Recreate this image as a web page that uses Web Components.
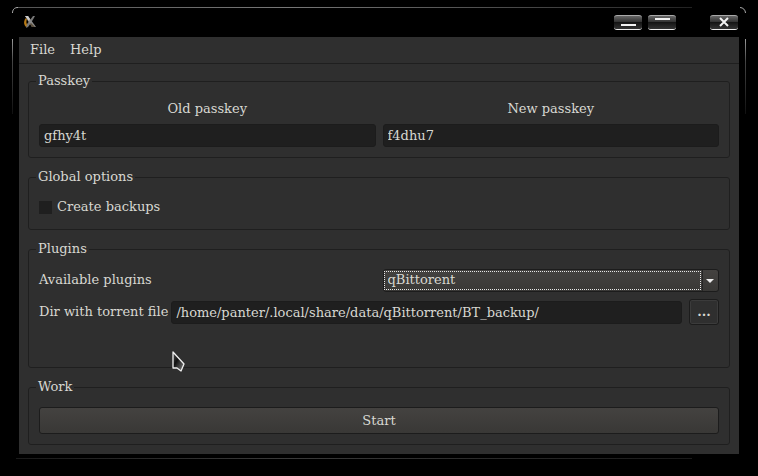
<!DOCTYPE html>
<html lang="en">
<head>
<meta charset="utf-8">
<title>Passkey</title>
<style>
  html, body {
    margin: 0;
    background: #000;
  }
  body {
    font: 13px/16px "DejaVu Serif", serif;
    color: #d8d8d2;
  }
  .columns {
    display: grid;
    grid-template-columns: 1fr 1fr;
    gap: 7px;
  }
  .rows {
    display: flex;
    flex-direction: column;
    gap: 6px;
  }
</style>
</head>
<body>

<app-window>
  <menu-bar slot="menu">
    <menu-item>File</menu-item>
    <menu-item>Help</menu-item>
  </menu-bar>

  <group-box label="Passkey">
    <div class="columns">
      <text-field label="Old passkey" value="gfhy4t"></text-field>
      <text-field label="New passkey" value="f4dhu7"></text-field>
    </div>
  </group-box>

  <group-box label="Global options">
    <check-option>Create backups</check-option>
  </group-box>

  <group-box label="Plugins" class="grow">
    <div class="rows">
      <combo-row label="Available plugins" options="qBittorent"></combo-row>
      <path-row label="Dir with torrent file" value="/home/panter/.local/share/data/qBittorrent/BT_backup/"></path-row>
    </div>
  </group-box>

  <group-box label="Work" class="roomy">
    <push-button>Start</push-button>
  </group-box>
</app-window>

<mouse-pointer></mouse-pointer>

<script>
'use strict';
(
  function () {

    // rules shared by every text box
    const inputStyle = `
      input {
        box-sizing: border-box;
        width: 100%;
        min-width: 0;
        height: 23px;
        padding: 0 4px;
        border: 1px solid #1c1c1c;
        border-radius: 3px;
        background: #1f1f1f;
        color: inherit;
        font: inherit;
        outline: none;
      }
    `;

    // attaches an open shadow root and fills it with the markup
    const render = function (element, markup) {
      const shadow = element.attachShadow({ mode: 'open' });
      shadow.innerHTML = markup;
      return shadow;
    };

    class AppWindow extends HTMLElement {
      constructor() {
        super();

        render(this, `
        <style>
          :host {
            box-sizing: border-box;
            position: relative;
            display: flex;
            flex-direction: column;
            min-height: 100vh;
            padding: 7px 19px 22px;
            background:
              linear-gradient(90deg, #555, #777 40%, #333 90%, #222) 16px 7px / calc(100% - 82px) 1px no-repeat,
              linear-gradient(#999, #444 30%, #111) 12px 39px / 1px 75px no-repeat,
              linear-gradient(#999, #444 30%, #111) calc(100% - 12px) 39px / 1px 75px no-repeat,
              linear-gradient(90deg, #1a1a1a, #3a3a3a 40%, #1a1a1a) 16px calc(100% - 17px) / calc(100% - 82px) 1px no-repeat,
              #000;
          }

          .corner {
            position: absolute;
            top: 7px;
            fill: none;
            stroke: #aaa;
          }

          .left {
            left: 12px;
          }

          .right {
            right: 12px;
          }

          header {
            display: flex;
            align-items: center;
            height: 30px;
            padding: 0 1px 0 4px;
          }

          .logo {
            margin-right: auto;
          }

          .buttons {
            display: flex;
            gap: 6px;
          }

          .client {
            flex: 1;
            display: flex;
            flex-direction: column;
            background: #2f2f2f;
          }

          main {
            flex: 1;
            display: flex;
            flex-direction: column;
            gap: 11px;
            padding: 9px;
          }
        </style>

        <svg class="corner left" width="6" height="7"><path d="M.5 6C.5 3 2 .5 6 .5"/></svg>
        <svg class="corner right" width="6" height="7"><path d="M0 .5C3 .5 5.500 3 5.500 6"/></svg>
        <header>
          <svg class="logo" width="14" height="14" viewBox="0 0 14 14">
            <path d="M3 3C1 5 0 9 3 12L5 11C3 9 3 6 4 4Z" fill="#b77a16"/>
            <path d="M12 1H10L4 9L3 13L5 12L8 8Z" fill="#777"/>
            <path d="M2 1H5L13 12L9 12L5 6Z" fill="#8a8a8a"/>
            <path d="M2 1H5L7 4L6 6Z" fill="#ccc"/>
            <path d="M8 8L12 12H9L7 9Z" fill="#5b4e3a"/>
          </svg>
          <div class="buttons">
            <caption-button kind="minimize"></caption-button>
            <caption-button kind="maximize"></caption-button>
            <caption-button kind="close"></caption-button>
          </div>
        </header>
        <div class="client">
          <slot name="menu"></slot>
          <main><slot></slot></main>
        </div>
        `);
      }
    }

    class CaptionButton extends HTMLElement {
      constructor() {
        super();

        const kind = this.getAttribute('kind');
        const glyphs = {
          minimize: '<path d="M7 10H22" stroke-width="2"/>',
          maximize: '<path d="M7 4H22" stroke-width="2"/>',
          close: '<path d="M10 3L18 11M18 3L10 11" stroke-width="2"/>'
        };

        render(this, `
        <style>
          :host {
            display: block;
          }

          :host([kind="close"]) {
            margin-left: 28px;
          }

          button {
            display: block;
            box-sizing: border-box;
            width: 28px;
            height: 15px;
            padding: 0;
            border: solid #777;
            border-width: 1px 0;
            border-top-color: #aaa;
            border-bottom-color: #eee;
            border-radius: 3px;
            background: linear-gradient(#666, #333 45%, #151515 50%, #333);
          }

          svg {
            display: block;
            margin-top: -1px;
            fill: none;
            stroke: #f2f2f2;
          }
        </style>
        <button type="button" aria-label="${kind}">
          <svg width="28" height="15">${glyphs[kind]}</svg>
        </button>
        `);
      }
    }

    class MenuBar extends HTMLElement {
      constructor() {
        super();

        render(this, `
        <style>
          :host {
            display: flex;
            gap: 15px;
            height: 26px;
            padding: 0 11px;
            border-bottom: 1px solid #1f1f1f;
          }
        </style>
        <slot></slot>
        `);
      }
    }

    class MenuItem extends HTMLElement {
      constructor() {
        super();

        render(this, `
        <style>
          :host {
            display: flex;
          }

          button {
            padding: 0;
            border: 0;
            background: none;
            color: inherit;
            font: inherit;
          }
        </style>
        <button type="button"><slot></slot></button>
        `);
      }
    }

    class GroupBox extends HTMLElement {
      constructor() {
        super();

        render(this, `
        <style>
          :host {
            display: flex;
            flex-direction: column;
          }

          :host(.grow) {
            flex: 1;
          }

          fieldset {
            flex: 1;
            min-width: 0;
            margin: 0;
            padding: 10px;
            border: 1px solid #1f1f1f;
            border-radius: 3px;
          }

          :host(.roomy) fieldset {
            padding-top: 12px;
          }

          legend {
            margin-left: -3px;
            padding: 0 2px;
          }
        </style>
        <fieldset>
          <legend>${this.getAttribute('label')}</legend>
          <slot></slot>
        </fieldset>
        `);
      }
    }

    class TextField extends HTMLElement {
      constructor() {
        super();

        render(this, `
        <style>
          :host {
            display: flex;
            flex-direction: column;
            gap: 5px;
          }

          label {
            line-height: 20px;
            text-align: center;
          }

          ${inputStyle}
        </style>
        <label for="field">${this.getAttribute('label')}</label>
        <input id="field" type="text" value="${this.getAttribute('value')}">
        `);
      }
    }

    class CheckOption extends HTMLElement {
      constructor() {
        super();

        render(this, `
        <style>
          :host {
            display: block;
          }

          label {
            display: flex;
            align-items: center;
            gap: 5px;
            height: 24px;
          }

          input {
            appearance: none;
            width: 13px;
            height: 13px;
            margin: 0;
            background: #1f1f1f;
          }

          input:checked {
            background: #d8d8d2;
          }
        </style>
        <label><input type="checkbox"><span><slot></slot></span></label>
        `);
      }
    }

    class ComboRow extends HTMLElement {
      constructor() {
        super();

        const options = this.getAttribute('options').split(',');

        render(this, `
        <style>
          :host {
            display: grid;
            grid-template-columns: 1fr 1fr;
            gap: 7px;
            align-items: center;
            height: 26px;
          }

          .combo {
            box-sizing: border-box;
            display: flex;
            height: 23px;
            border: 1px solid #1c1c1c;
            border-radius: 3px;
            background: linear-gradient(#444240, #393836);
          }

          select {
            appearance: none;
            flex: 1;
            min-width: 0;
            margin: 1px 0;
            padding: 0 3px;
            border: 1px dotted #e6e6e6;
            border-radius: 0;
            background: none;
            color: inherit;
            font: inherit;
            outline: none;
          }

          svg {
            margin-left: 1px;
            border-left: 1px solid #262626;
            fill: #eee;
          }
        </style>
        <label for="list">${this.getAttribute('label')}</label>
        <div class="combo">
          <select id="list">${options.map(option => `<option>${option}</option>`).join('')}</select>
          <svg width="15" height="21"><path d="M3 9H11L7 13Z"/></svg>
        </div>
        `);
      }
    }

    class PathRow extends HTMLElement {
      constructor() {
        super();

        render(this, `
        <style>
          :host {
            display: flex;
            align-items: center;
          }

          label {
            white-space: nowrap;
          }

          ${inputStyle}

          input {
            flex: 1;
            margin: 0 7px 0 3px;
          }

          button {
            box-sizing: border-box;
            width: 30px;
            height: 26px;
            padding: 0;
            border: 1px solid #1c1c1c;
            border-radius: 3px;
            background: #2f2f2f;
            box-shadow: inset 0 0 0 1px #3b3b3b;
            color: inherit;
            font: inherit;
            font-weight: bold;
          }
        </style>
        <label for="path">${this.getAttribute('label')}</label>
        <input id="path" type="text" value="${this.getAttribute('value')}">
        <button type="button" aria-label="Browse">...</button>
        `);
      }
    }

    class PushButton extends HTMLElement {
      constructor() {
        super();

        render(this, `
        <style>
          :host {
            display: block;
          }

          button {
            display: block;
            width: 100%;
            height: 27px;
            padding: 0;
            border: 1px solid #1c1c1c;
            border-radius: 3px;
            background: linear-gradient(#444240, #393836);
            color: inherit;
            font: inherit;
          }
        </style>
        <button type="button"><slot></slot></button>
        `);
      }
    }

    class MousePointer extends HTMLElement {
      constructor() {
        super();

        render(this, `
        <style>
          :host {
            position: absolute;
            left: 171px;
            top: 350px;
            pointer-events: none;
          }

          svg {
            display: block;
          }
        </style>
        <svg width="16" height="24" viewBox="0 0 16 24">
          <defs>
            <linearGradient id="shade" x1="0" y1="0" x2="1" y2="1">
              <stop offset="0" stop-color="#555"/>
              <stop offset=".4" stop-color="#111"/>
              <stop offset="1" stop-color="#888"/>
            </linearGradient>
          </defs>
          <path d="M2 2L13 14L10 21L6 18L2 18Z" fill="url(#shade)" stroke="#eee" stroke-width="1.300" stroke-linejoin="round"/>
        </svg>
        `);
      }
    }

    // let the browser know about the custom elements
    customElements.define('app-window', AppWindow);
    customElements.define('caption-button', CaptionButton);
    customElements.define('menu-bar', MenuBar);
    customElements.define('menu-item', MenuItem);
    customElements.define('group-box', GroupBox);
    customElements.define('text-field', TextField);
    customElements.define('check-option', CheckOption);
    customElements.define('combo-row', ComboRow);
    customElements.define('path-row', PathRow);
    customElements.define('push-button', PushButton);
    customElements.define('mouse-pointer', MousePointer);
  })();
</script>
</body>
</html>
